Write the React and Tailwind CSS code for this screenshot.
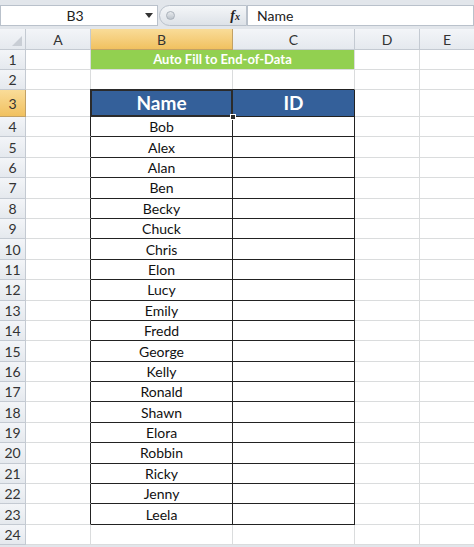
import React from 'react';

const names = [
  'Bob', 'Alex', 'Alan', 'Ben', 'Becky', 'Chuck', 'Chris', 'Elon', 'Lucy', 'Emily',
  'Fredd', 'George', 'Kelly', 'Ronald', 'Shawn', 'Elora', 'Robbin', 'Ricky', 'Jenny', 'Leela',
];

const grid = 'border-r border-b border-[#dadcdd]';

function RowHead({ n, active, h }) {
  return (
    <div
      className={`w-[26px] shrink-0 flex items-center justify-center text-[14px] text-[#333] border-r border-b ${
        active
          ? 'bg-gradient-to-b from-[#f9dc98] to-[#f1c15f] border-[#c2a165]'
          : 'bg-gradient-to-b from-[#f3f5f8] to-[#e5e9ee] border-[#c4cad2]'
      }`}
      style={{ height: h }}
    >
      {n}
    </div>
  );
}

function Row({ n, h = 20.4, children, active }) {
  return (
    <div className="flex" style={{ height: h }}>
      <RowHead n={n} active={active} h={h} />
      {children}
    </div>
  );
}

export default function App() {
  return (
    <div className="w-[474px] h-[547px] overflow-hidden bg-white font-['Lato','Open_Sans',sans-serif] select-none">
      {/* formula bar */}
      <div className="h-[5px] bg-[#e2e6eb]" />
      <div className="flex h-[21px] bg-[#e2e6eb]">
        <div className="w-[158px] bg-white border border-[#b9c1cb] flex items-center relative">
          <span className="flex-1 text-center text-[14px] text-[#222] pl-[4px]">B3</span>
          <svg width="8" height="5" viewBox="0 0 8 5" className="mr-[4px]">
            <path d="M0 0 L8 0 L4 5 Z" fill="#333" />
          </svg>
        </div>
        <div className="w-[88px] ml-[1px] rounded-l-full bg-gradient-to-b from-[#f4f6f8] to-[#dde2e8] border border-[#b9c1cb] flex items-center justify-between pl-[6px] pr-[6px]">
          <span className="w-[9px] h-[9px] rounded-full bg-gradient-to-b from-[#e8ebee] to-[#bcc3cb] border border-[#a9b1ba]" />
          <span className="font-['Liberation_Serif',serif] italic font-bold text-[14px] text-[#222] leading-none">
            f<span className="text-[10px]">x</span>
          </span>
        </div>
        <div className="flex-1 bg-white border border-[#b9c1cb] flex items-center pl-[9px] text-[14px] text-[#222]">
          Name
        </div>
      </div>
      <div className="h-[3px] bg-[#e2e6eb]" />

      {/* column headers */}
      <div className="flex h-[21px] text-[14px] text-[#333]">
        <div className="w-[26px] shrink-0 bg-gradient-to-b from-[#f3f5f8] to-[#e5e9ee] border-r border-b border-[#c4cad2] relative">
          <svg width="10" height="10" viewBox="0 0 10 10" className="absolute right-[3px] bottom-[3px]">
            <path d="M10 0 L10 10 L0 10 Z" fill="#c9ced5" />
          </svg>
        </div>
        <div className="w-[65px] shrink-0 flex items-center justify-center bg-gradient-to-b from-[#f3f5f8] to-[#e5e9ee] border-r border-b border-[#c4cad2]">A</div>
        <div className="w-[142px] shrink-0 flex items-center justify-center bg-gradient-to-b from-[#f9dc98] to-[#f1c15f] border-r border-b border-[#c2a165]">B</div>
        <div className="w-[122px] shrink-0 flex items-center justify-center bg-gradient-to-b from-[#f3f5f8] to-[#e5e9ee] border-r border-b border-[#c4cad2]">C</div>
        <div className="w-[65px] shrink-0 flex items-center justify-center bg-gradient-to-b from-[#f3f5f8] to-[#e5e9ee] border-r border-b border-[#c4cad2]">D</div>
        <div className="flex-1 flex items-center justify-center bg-gradient-to-b from-[#f3f5f8] to-[#e5e9ee] border-b border-[#c4cad2]">E</div>
      </div>

      {/* row 1 */}
      <Row n={1} h={20}>
        <div className={`w-[65px] shrink-0 ${grid}`} />
        <div className="w-[264px] shrink-0 bg-[#92d050] border-r border-b border-[#dadcdd] flex items-center justify-center text-white font-bold text-[13px]">
          Auto Fill to End-of-Data
        </div>
        <div className={`w-[65px] shrink-0 ${grid}`} />
        <div className="flex-1 border-b border-[#dadcdd]" />
      </Row>

      {/* row 2 */}
      <Row n={2} h={20}>
        <div className={`w-[65px] shrink-0 ${grid}`} />
        <div className="w-[142px] shrink-0 border-r border-b border-r-[#dadcdd] border-b-[#222]" />
        <div className="w-[122px] shrink-0 border-r border-b border-r-[#dadcdd] border-b-[#222]" />
        <div className={`w-[65px] shrink-0 ${grid}`} />
        <div className="flex-1 border-b border-[#dadcdd]" />
      </Row>

      {/* row 3 */}
      <Row n={3} h={27} active>
        <div className="w-[65px] shrink-0 border-r border-b border-r-[#222] border-b-[#dadcdd]" />
        <div className="w-[142px] shrink-0 bg-[#34609a] border-r border-b border-[#222] relative flex items-center justify-center text-white font-bold text-[19px]">
          Name
          <div className="absolute inset-[-1px] border-2 border-[#2b2b2b]" />
          <div className="absolute right-[-4px] bottom-[-4px] w-[6px] h-[6px] bg-[#2b2b2b] border border-white" />
        </div>
        <div className="w-[122px] shrink-0 bg-[#34609a] border-r border-b border-[#222] flex items-center justify-center text-white font-bold text-[19px]">
          ID
        </div>
        <div className={`w-[65px] shrink-0 ${grid}`} />
        <div className="flex-1 border-b border-[#dadcdd]" />
      </Row>

      {names.map((name, i) => (
        <Row key={name} n={i + 4}>
          <div className="w-[65px] shrink-0 border-r border-b border-r-[#222] border-b-[#dadcdd]" />
          <div className="w-[142px] shrink-0 border-r border-b border-[#222] flex items-center justify-center text-[14px] text-[#111]">
            {name}
          </div>
          <div className="w-[122px] shrink-0 border-r border-b border-[#222]" />
          <div className={`w-[65px] shrink-0 ${grid}`} />
          <div className="flex-1 border-b border-[#dadcdd]" />
        </Row>
      ))}

      {/* row 24 */}
      <Row n={24} h={20}>
        <div className={`w-[65px] shrink-0 ${grid}`} />
        <div className={`w-[142px] shrink-0 ${grid}`} />
        <div className={`w-[122px] shrink-0 ${grid}`} />
        <div className={`w-[65px] shrink-0 ${grid}`} />
        <div className="flex-1 border-b border-[#dadcdd]" />
      </Row>
      <div className="h-[10px] bg-[#e2e6eb]" />
    </div>
  );
}
